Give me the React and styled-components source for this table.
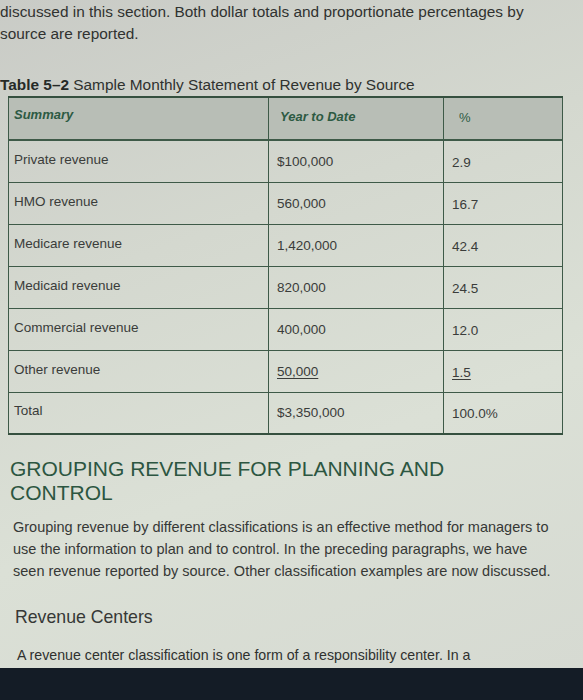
import React from 'react'
import styled, {createGlobalStyle} from 'styled-components'

const rows = [
	{label: 'Private revenue', amount: '$100,000', pct: '2.9'},
	{label: 'HMO revenue', amount: '560,000', pct: '16.7'},
	{label: 'Medicare revenue', amount: '1,420,000', pct: '42.4'},
	{label: 'Medicaid revenue', amount: '820,000', pct: '24.5'},
	{label: 'Commercial revenue', amount: '400,000', pct: '12.0'},
	{label: 'Other revenue', amount: '50,000', pct: '1.5', underline: true},
	{label: 'Total', amount: '$3,350,000', pct: '100.0%'},
]

function App() {
	return (
		<>
			<GlobalStyle/>
			<Page>
				<Content>
					<Intro>
						discussed in this section. Both dollar totals and proportionate percentages by
						<br/>source are reported.
					</Intro>

					<Caption><b>Table 5–2</b> Sample Monthly Statement of Revenue by Source</Caption>
					<Table>
						<thead>
							<tr>
								<HeadCell>Summary</HeadCell>
								<HeadCell>Year to Date</HeadCell>
								<HeadCell>%</HeadCell>
							</tr>
						</thead>
						<tbody>
							{rows.map(r => (
								<tr key={r.label}>
									<Cell>{r.label}</Cell>
									<Cell underline={r.underline}>{r.amount}</Cell>
									<Cell underline={r.underline}>{r.pct}</Cell>
								</tr>
							))}
						</tbody>
					</Table>

					<Heading>GROUPING REVENUE FOR PLANNING AND<br/>CONTROL</Heading>
					<Paragraph>
						Grouping revenue by different classifications is an effective method for managers to
						use the information to plan and to control. In the preceding paragraphs, we have
						seen revenue reported by source. Other classification examples are now discussed.
					</Paragraph>

					<SubHeading>Revenue Centers</SubHeading>
					<LastLine>A revenue center classification is one form of a responsibility center. In a</LastLine>
				</Content>
				<Bezel/>
			</Page>
		</>
	)
}

const GlobalStyle = createGlobalStyle`
    html, body {margin: 0; padding: 0;}
    body {
        font-family: "Liberation Sans", Arial, sans-serif;
        background: #141b24;
    }
`

const Page = styled.div`
    width: 583px;
    height: 700px;
    overflow: hidden;
    display: flex;
    flex-direction: column;
`

const Content = styled.div`
    height: 668px;
    box-sizing: border-box;
    padding-top: 1px;
    background: linear-gradient(160deg, #c9cbc6 0%, #d4d8cf 35%, #dbe0d6 65%, #d6dad2 100%);
    color: #383a38;
    overflow: hidden;
`

const Intro = styled.p`
    margin: 0;
    font-size: 15.4px;
    line-height: 22px;
    color: #303230;
    white-space: nowrap;
`

const Caption = styled.div`
    margin: 30px 0 0 0;
    font-size: 15.4px;
    line-height: 20px;
    color: #2f322f;
    white-space: nowrap;

    b {color: #262a27;}
`

const Table = styled.table`
    margin: 1px 0 0 8px;
    width: 555px;
    border-collapse: collapse;
    border-top: 2px solid #35503f;
    border-bottom: 2px solid #35503f;
    table-layout: fixed;

    td, th {box-sizing: border-box;}
    th:nth-child(1), td:nth-child(1) {width: 260px;}
    th:nth-child(2), td:nth-child(2) {width: 175px;}
`

const HeadCell = styled.th`
    height: 43px;
    padding: 9px 6px 0 5px;
    vertical-align: top;
    text-align: left;
    font-size: 13px;
    font-weight: bold;
    font-style: italic;
    color: #2d5a43;
    background: #b8beb6;
    border: 1px solid #3e5a48;
    border-top: none;
    border-bottom-width: 2px;

    &:last-child {font-style: normal; font-weight: normal; padding-top: 12px; padding-left: 15px;}
    &:nth-child(2) {padding-left: 11px; padding-top: 11px;}
`

const Cell = styled.td`
    height: 42px;
    padding: 0 6px 4px 5px;
    font-size: 13.5px;
    color: #3a3c3a;
    border: 1px solid #3e5a48;
    border-bottom-width: 1.5px;
    text-decoration: ${props => props.underline ? 'underline' : 'none'};
    text-underline-offset: 2px;

    &:nth-child(2) {padding-left: 8px; padding-top: 4px;}
    &:nth-child(3) {padding-left: 8px; padding-top: 6px;}
`

const Heading = styled.h2`
    margin: 22px 0 0 10px;
    font-size: 21px;
    line-height: 24px;
    font-weight: normal;
    color: #2c5641;
`

const Paragraph = styled.p`
    margin: 11px 0 0 13px;
    width: 545px;
    font-size: 14.5px;
    line-height: 22px;
    color: #363836;
`

const SubHeading = styled.h3`
    margin: 24px 0 0 15px;
    font-size: 17.7px;
    line-height: 22px;
    font-weight: normal;
    color: #363836;
`

const LastLine = styled.p`
    margin: 16px 0 0 17px;
    font-size: 14.2px;
    line-height: 22px;
    color: #2f312f;
    white-space: nowrap;
`

const Bezel = styled.div`
    flex: 1;
    background: #141c26;
`

export default App
